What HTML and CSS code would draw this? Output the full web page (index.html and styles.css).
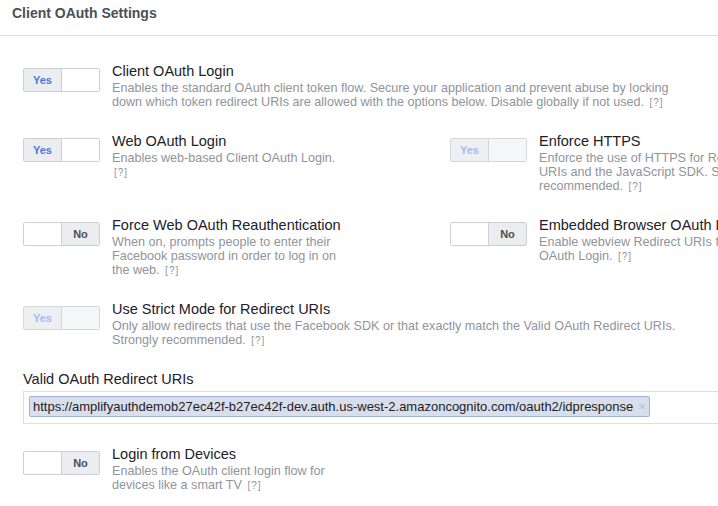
FILE: index.html
```html
<!DOCTYPE html>
<html>
<head>
<meta charset="utf-8">
<link rel="stylesheet" href="styles.css">
</head>
<body>
<div class="page">
  <div class="header"><h2 class="header-title">Client OAuth Settings</h2></div>
  <div class="content">
    <div class="setting">
      <div class="toggle on"><span class="seg yes">Yes</span><span class="seg blank"></span></div>
      <div class="text wide">
        <div class="title">Client OAuth Login</div>
        <div class="desc">Enables the standard OAuth client token flow. Secure your application and prevent abuse by locking down which token redirect URIs are allowed with the options below. Disable globally if not used. <span class="help">[?]</span></div>
      </div>
    </div>

    <div class="pair">
      <div class="setting">
        <div class="toggle on"><span class="seg yes">Yes</span><span class="seg blank"></span></div>
        <div class="text">
          <div class="title">Web OAuth Login</div>
          <div class="desc">Enables web-based Client OAuth Login. <span class="help">[?]</span></div>
        </div>
      </div>
      <div class="setting">
        <div class="toggle on disabled"><span class="seg yes">Yes</span><span class="seg blank"></span></div>
        <div class="text">
          <div class="title">Enforce HTTPS</div>
          <div class="desc">Enforce the use of HTTPS for Redirect URIs and the JavaScript SDK. Strongly recommended. <span class="help">[?]</span></div>
        </div>
      </div>
    </div>

    <div class="pair">
      <div class="setting">
        <div class="toggle off"><span class="seg blank"></span><span class="seg no">No</span></div>
        <div class="text">
          <div class="title">Force Web OAuth Reauthentication</div>
          <div class="desc">When on, prompts people to enter their Facebook password in order to log in on the web. <span class="help">[?]</span></div>
        </div>
      </div>
      <div class="setting">
        <div class="toggle off"><span class="seg blank"></span><span class="seg no">No</span></div>
        <div class="text">
          <div class="title">Embedded Browser OAuth Login</div>
          <div class="desc">Enable webview Redirect URIs for Client OAuth Login. <span class="help">[?]</span></div>
        </div>
      </div>
    </div>

    <div class="setting">
      <div class="toggle on disabled"><span class="seg yes">Yes</span><span class="seg blank"></span></div>
      <div class="text wide">
        <div class="title">Use Strict Mode for Redirect URIs</div>
        <div class="desc">Only allow redirects that use the Facebook SDK or that exactly match the Valid OAuth Redirect URIs. Strongly recommended. <span class="help">[?]</span></div>
      </div>
    </div>

    <div class="field">
      <div class="field-label">Valid OAuth Redirect URIs</div>
      <div class="token-input">
        <span class="token">https://amplifyauthdemob27ec42f-b27ec42f-dev.auth.us-west-2.amazoncognito.com/oauth2/idpresponse<span class="token-x">×</span></span>
      </div>
    </div>

    <div class="setting">
      <div class="toggle off"><span class="seg blank"></span><span class="seg no">No</span></div>
      <div class="text">
        <div class="title">Login from Devices</div>
        <div class="desc">Enables the OAuth client login flow for devices like a smart TV <span class="help">[?]</span></div>
      </div>
    </div>
  </div>
</div>
</body>
</html>
```

FILE: styles.css
```css
html, body {
  margin: 0;
  padding: 0;
  background: #ffffff;
  overflow: hidden;
}

body {
  font-family: "Liberation Sans", Arial, Helvetica, sans-serif;
  color: #1d2129;
}

.page {
  width: 1000px;
}

.header {
  border-bottom: 1px solid #dddfe2;
  padding: 4px 12px 13px;
}

.header-title {
  margin: 0;
  font-size: 14px;
  line-height: 18px;
  font-weight: bold;
  color: #4b4f56;
}

.content {
  padding: 25px 0 0 23px;
  display: flex;
  flex-direction: column;
  gap: 21px;
}

.pair {
  display: grid;
  grid-template-columns: 427px auto;
}

.setting {
  display: flex;
  gap: 12px;
  align-items: flex-start;
}

.toggle {
  flex: none;
  width: 77px;
  height: 24px;
  box-sizing: border-box;
  margin-top: 7px;
  border: 1px solid #ccd0d5;
  border-radius: 2px;
  display: flex;
  overflow: hidden;
  background: #ffffff;
}

.seg {
  flex: 1;
  display: flex;
  align-items: center;
  justify-content: center;
  font-size: 11px;
  font-weight: bold;
}

.seg.yes {
  background: #ebedf0;
  color: #4a78dc;
  border-right: 1px solid #ccd0d5;
}

.seg.no {
  background: #ebedf0;
  color: #4b4f56;
  border-left: 1px solid #ccd0d5;
}

.seg.blank {
  background: #ffffff;
}

.toggle.disabled {
  border-color: #d3d6db;
}

.toggle.disabled .seg.yes {
  color: #a3bcf0;
  background: #edeff2;
  border-right-color: #d3d6db;
}

.toggle.disabled .seg.blank {
  background: #f5f6f7;
}

.text {
  width: 230px;
}

.text.wide {
  width: 580px;
}

.title {
  font-size: 14.5px;
  line-height: 20px;
  color: #1d2129;
  white-space: nowrap;
}

.desc {
  font-size: 12.6px;
  line-height: 14px;
  color: #90949c;
}

.help {
  font-size: 10px;
  letter-spacing: 1px;
  margin-left: 2px;
}

.field {
  margin-bottom: -1px;
}

.field-label {
  font-size: 14.5px;
  line-height: 20px;
  color: #1d2129;
  margin-bottom: 2px;
}

.token-input {
  height: 33px;
  box-sizing: border-box;
  border: 1px solid #dddfe2;
  padding: 4px 5px;
  display: flex;
  align-items: flex-start;
}

.token {
  display: inline-flex;
  align-items: center;
  height: 21px;
  box-sizing: border-box;
  background: #d8dfeb;
  border: 1px solid #9db1d9;
  border-radius: 2px;
  padding: 0 3px 0 3px;
  font-size: 13px;
  color: #1d2129;
  white-space: nowrap;
}

.token-x {
  color: #b8c0cc;
  font-size: 13px;
  margin-left: 5px;
}
```
